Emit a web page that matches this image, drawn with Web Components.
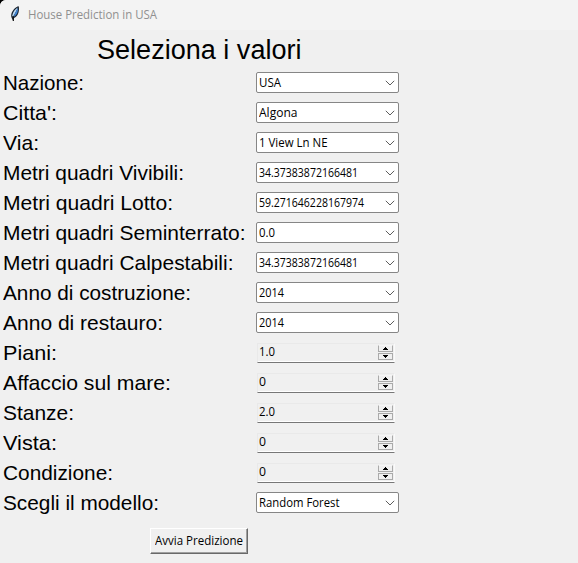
<!DOCTYPE html>
<html lang="it"><head><meta charset="utf-8"><title>House Prediction in USA</title>
<style>html,body{margin:0;height:100%;background:#000;overflow:hidden}</style></head>
<body><house-window></house-window>
<script>
const define=(name,html,setup)=>customElements.define(name,class extends HTMLElement{
  constructor(){super();this.attachShadow({mode:'open'}).innerHTML=html;}
  connectedCallback(){if(setup)setup(this,this.shadowRoot);}
});

/* Single line of text scaled horizontally to a given advance width. */
define('fit-text',`<style>:host{display:block;white-space:nowrap}span{display:inline-block;transform-origin:0 0}</style><span><slot></slot></span>`,
(el,r)=>{const s=r.querySelector('span'),w=+el.getAttribute('width');
  const n=s.getBoundingClientRect().width;if(w&&n)s.style.transform=`scaleX(${w/n})`;});

define('title-bar',`<style>
:host{display:flex;height:30px;background:#f3f3f3;align-items:flex-start;color:#909090;font:12px/16px "Open Sans",sans-serif}
svg{margin:6px 0 0 8px;width:14px;height:16px;flex:none}
fit-text{margin:7px 0 0 6px}
</style><svg viewBox="0 0 14 16"><path d="M10.700.3C7.500.8 4.200 4.500 3.300 8.300c-.3 1.700 0 2.800.5 4L5.500 15.200l.2-3c2.300-.8 4.300-3 4.900-5.900.4-2 .6-4 .1-6z" fill="#1b2430"/><path d="M9.800 1.500C7 3 4.900 6 4.300 9.500l.6 1.300C7 7.500 8.600 4.500 9.800 1.500z" fill="#b9d9f5"/><path d="M10 2C10.200 6 9 9 5.700 11 6.500 8 8 5 10 2z" fill="#3f86d8"/><path d="M5.300 10.500v4.500" stroke="#111" stroke-width="1.200"/></svg><fit-text width="129">House Prediction in USA</fit-text>`);

define('combo-box',`<style>
:host{display:flex;box-sizing:border-box;width:143px;height:21px;margin-top:4px;border:1px solid #868686;border-radius:2px;background:#fff;justify-content:space-between;font:12px/19px "Open Sans",sans-serif;color:#000}
div{padding-left:2px;width:120px}svg{width:10px;height:6px;margin:7px 3px 0 0;flex:none}
</style><div><slot></slot></div><svg viewBox="0 0 10 6"><path d="M.8.8 5 5 9.200.8" fill="none" stroke="#5c5c5c"/></svg>`);

define('spin-box',`<style>
:host{display:flex;box-sizing:border-box;width:138px;height:20px;margin:5px 0 0 1px;border:1px solid #e9e9e9;border-right-color:#fafafa;border-bottom-color:#777;box-shadow:inset 0 -1px #fff;justify-content:space-between;font:12px/17px "Open Sans",sans-serif;color:#000}
.v{padding-left:1px;margin-top:-1px}.b{display:grid;grid-template-rows:7px 7px;gap:1px;margin:1px 1px 0 0}
i{box-sizing:border-box;width:15px;border:1px solid #aaa;display:flex;align-items:center;justify-content:center}
i:first-child{border-top-color:#f6f6f6}svg{width:5px;height:3px;display:block}
</style><div class="v"><slot></slot></div><div class="b"><i><svg viewBox="0 0 5 3" shape-rendering="crispEdges"><path d="M2 0h1v1h1v1h1v1H0V2h1V1h1z"/></svg></i><i><svg viewBox="0 0 5 3" shape-rendering="crispEdges"><path d="M0 0h5v1H4v1H3v1H2V2H1V1H0z"/></svg></i></div>`);

define('form-row',`<style>
:host{display:grid;grid-template-columns:253.3px 1fr;height:30px;align-items:start}
.l{font:21px/30px "Liberation Sans",Arial,sans-serif}
</style><div class="l"><slot name="label"></slot></div><div><slot></slot></div>`);

define('push-button',`<style>
:host{display:block;box-sizing:border-box;width:98px;height:26px;border:1px solid #fff;border-right-color:#696969;border-bottom-color:#696969;box-shadow:inset -1px -1px #a0a0a0;padding-left:4px;font:12px/24px "Open Sans",sans-serif}
</style><slot></slot>`);

const rows=[['Nazione:',82,'c','USA',22],["Citta':",55,'c','Algona',38.5],['Via:',37,'c','1 View Ln NE',68.5],
['Metri quadri Vivibili:',182,'c','34.37383872166481',99],['Metri quadri Lotto:',171,'c','59.271646228167974',105],
['Metri quadri Seminterrato:',243.5,'c','0.0',16],['Metri quadri Calpestabili:',231.5,'c','34.37383872166481',99],
['Anno di costruzione:',189,'c','2014',25],['Anno di restauro:',161,'c','2014',25],['Piani:',55,'s','1.0',16],
['Affaccio sul mare:',169,'s','0',7],['Stanze:',72,'s','2.0',16],['Vista:',55,'s','0',7],['Condizione:',111,'s','0',7],
['Scegli il modello:',157,'c','Random Forest',80.5]];
define('house-window',`<style>
:host{display:flex;flex-direction:column;width:578px;height:563px;background:#f0f0f0;border-radius:6px 0 0 0;overflow:hidden;color:#000}
h1{margin:0 0 0 97px;height:38px;font:27px/41px "Liberation Sans",Arial,sans-serif}
main{padding-left:2.7px}
push-button{margin:10px 0 0 150px}
</style><title-bar></title-bar><h1><fit-text width="204.5">Seleziona i valori</fit-text></h1><main>${
rows.map(([l,w,k,v,vw])=>{const t=k==='c'?'combo-box':'spin-box';
return `<form-row><fit-text slot="label" width="${w-1}">${l}</fit-text><${t}><fit-text width="${vw}">${v}</fit-text></${t}></form-row>`}).join('')
}</main><push-button><fit-text width="88">Avvia Predizione</fit-text></push-button>`);
</script></body></html>
